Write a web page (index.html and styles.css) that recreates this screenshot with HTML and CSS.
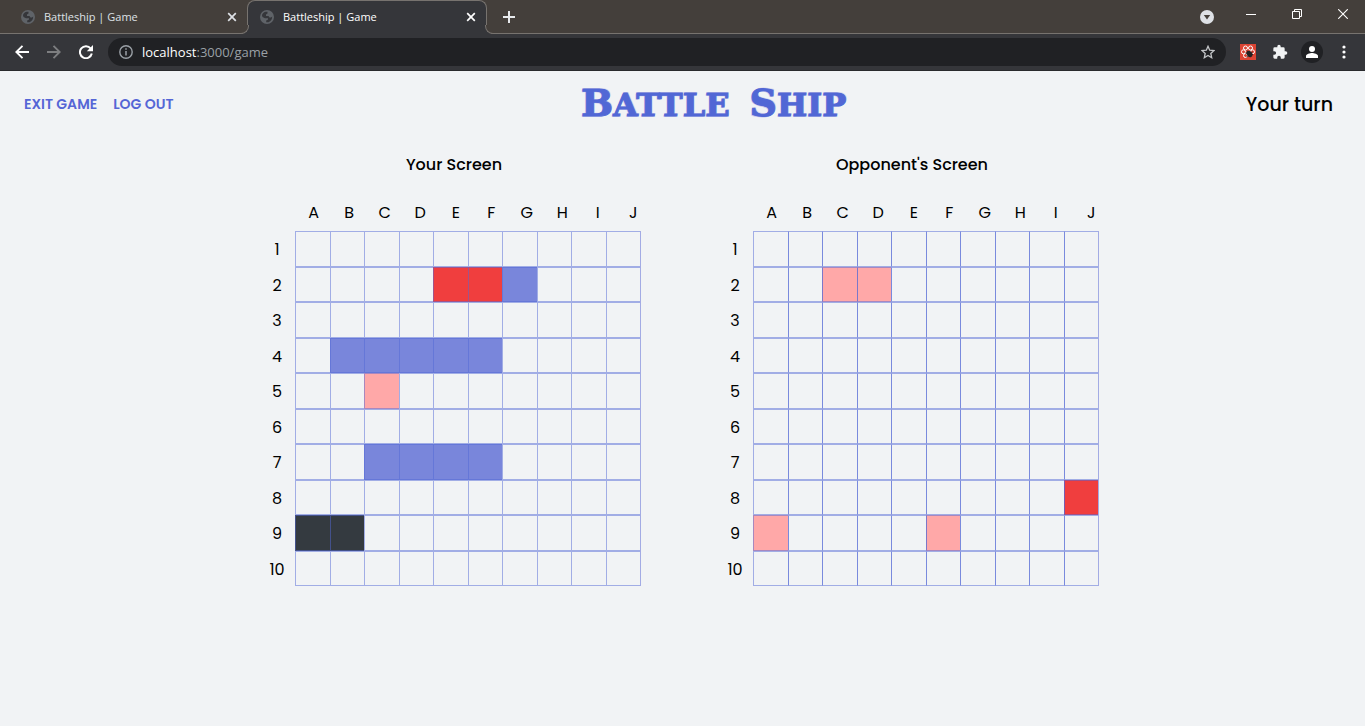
FILE: index.html
```html
<!DOCTYPE html>
<html lang="en">
<head>
<meta charset="utf-8">
<title>Battleship | Game</title>
<link rel="stylesheet" href="styles.css">
</head>
<body>
<svg width="0" height="0" class="defs" aria-hidden="true">
  <symbol id="globe" viewBox="0 0 14 14"><circle cx="7" cy="7" r="7" fill="#5f6368"/><path d="M2 5.500C2 4 3.600 2.200 5.500 1.800L7.500 1.700V3.500L6 4.600V6H8.500L9.500 7.500L11 7.600L12.200 6.500C12.300 9 11 11.300 8.500 12.200L6.200 12.200V10.500L8 9.500V8.300H5L2.500 7Z" fill="#35363a"/></symbol>
  <symbol id="cross" viewBox="0 0 10 10"><path d="M1.200 1.200L8.800 8.800M8.800 1.200L1.200 8.800" stroke="currentColor" stroke-width="1.700"/></symbol>
</svg>
<header class="browser">
  <div class="tabstrip">
    <div class="tab"><svg class="favicon"><use href="#globe"/></svg><span class="tab-name">Battleship | Game</span><button class="icon-btn tab-close" aria-label="Close tab"><svg width="10" height="10"><use href="#cross"/></svg></button></div>
    <div class="tab tab-active"><svg class="favicon"><use href="#globe"/></svg><span class="tab-name">Battleship | Game</span><button class="icon-btn tab-close" aria-label="Close tab"><svg width="10" height="10"><use href="#cross"/></svg></button></div>
    <div class="strip-rest">
      <button class="icon-btn new-tab" aria-label="New tab"><svg width="12" height="12" viewBox="0 0 12 12"><path d="M6 0V12M0 6H12" stroke="#e8eaed" stroke-width="2"/></svg></button>
      <button class="icon-btn tab-search" aria-label="Search tabs"><svg width="14" height="14" viewBox="0 0 14 14"><circle cx="7" cy="7" r="7" fill="#dee1e6"/><path d="M3.800 5H10.200L7 9.500Z" fill="#443f3b"/></svg></button>
      <div class="window-buttons">
        <button class="icon-btn" aria-label="Minimize"><svg width="10" height="10" viewBox="0 0 10 10"><path d="M0 5.500H10" stroke="#fff"/></svg></button>
        <button class="icon-btn" aria-label="Restore"><svg width="10" height="10" viewBox="0 0 10 10"><path d="M.5 2.500H7.500V9.500H.5ZM2.500 2.500V.5H9.500V7.500H7.500" fill="none" stroke="#fff"/></svg></button>
        <button class="icon-btn" aria-label="Close window"><svg width="10" height="10" viewBox="0 0 10 10"><path d="M.2.2L9.800 9.800M9.800.2L.2 9.800" stroke="#fff" stroke-width="1.100"/></svg></button>
      </div>
    </div>
  </div>
  <div class="toolbar">
    <button class="icon-btn tool" aria-label="Back"><svg width="14" height="14" viewBox="0 0 14 14"><path d="M14 7H1.500M7.500.8L1.300 7L7.500 13.200" fill="none" stroke="#fff" stroke-width="1.900"/></svg></button>
    <button class="icon-btn tool" aria-label="Forward"><svg width="14" height="14" viewBox="0 0 14 14"><path d="M0 7H12.500M6.500.8L12.700 7L6.500 13.200" fill="none" stroke="#7d7e80" stroke-width="1.900"/></svg></button>
    <button class="icon-btn tool" aria-label="Reload"><svg width="14" height="14" viewBox="0 0 14 14"><path d="M11.700 3.500A6 6 0 1 0 12.800 8.500" fill="none" stroke="#fff" stroke-width="2"/><path d="M14 0V6.200H7.800Z" fill="#fff"/></svg></button>
    <div class="address">
      <svg width="14" height="14" viewBox="0 0 14 14"><circle cx="7" cy="7" r="6.200" fill="none" stroke="#9aa0a6" stroke-width="1.400"/><path d="M7 6V10.500M7 3.300V4.800" stroke="#9aa0a6" stroke-width="1.500"/></svg>
      <span class="url"><b>localhost</b>:3000/game</span>
      <button class="icon-btn star" aria-label="Bookmark this page"><svg width="14" height="14" viewBox="0 0 14 14"><path d="M7 1.300L8.700 5.200L13 5.600L9.800 8.400L10.700 12.700L7 10.500L3.300 12.700L4.200 8.400L1 5.600L5.300 5.200Z" fill="none" stroke="#c4c6c9" stroke-width="1.300"/></svg></button>
    </div>
    <div class="extensions">
      <button class="icon-btn" aria-label="React developer tools"><svg width="16" height="16" viewBox="0 0 16 16"><path d="M0 0H16V16H0Z" fill="#dc4433"/><g fill="none" stroke="#fff" stroke-width="1"><circle cx="5.500" cy="4" r="2"/><circle cx="10.500" cy="4" r="2"/><circle cx="3.500" cy="7.800" r="2"/><circle cx="12.500" cy="7.800" r="2"/><circle cx="5.500" cy="11.500" r="2"/></g><ellipse cx="9.500" cy="10" rx="2.600" ry="3.400" transform="rotate(-30 9.500 10)" fill="#222"/><path d="M5.500 9L13 10.500M6.500 13L12.500 8M7 6.500L8.500 8.500" stroke="#222"/></svg></button>
      <button class="icon-btn" aria-label="Extensions"><svg width="16" height="16" viewBox="0 0 24 24"><path d="M20.500 11H19V7a2 2 0 0 0-2-2h-4V3.500a2.500 2.500 0 0 0-5 0V5H4a2 2 0 0 0-2 2v3.800h1.500a2.700 2.700 0 0 1 0 5.400H2V20a2 2 0 0 0 2 2h3.800v-1.500a2.700 2.700 0 0 1 5.400 0V22H17a2 2 0 0 0 2-2v-4h1.500a2.500 2.500 0 0 0 0-5z" fill="#f1f3f4"/></svg></button>
      <button class="icon-btn" aria-label="Profile"><svg width="22" height="22" viewBox="0 0 22 22"><circle cx="11" cy="11" r="11" fill="#202124"/><circle cx="11" cy="8" r="3" fill="#fff"/><path d="M5 17V15C5 13 9 12 11 12S17 13 17 15V17Z" fill="#fff"/></svg></button>
      <button class="icon-btn" aria-label="Menu"><svg width="4" height="14" viewBox="0 0 4 14" fill="#fff"><circle cx="2" cy="2" r="1.600"/><circle cx="2" cy="7" r="1.600"/><circle cx="2" cy="12" r="1.600"/></svg></button>
    </div>
  </div>
</header>
<main class="game">
  <div class="game-header">
    <nav class="nav"><a href="#">EXIT GAME</a><a href="#">LOG OUT</a></nav>
    <h1 class="logo"><span><span class="cap">B</span>ATTLE</span> <span><span class="cap">S</span>HIP</span></h1>
    <p class="turn">Your turn</p>
  </div>
  <div class="screens">
    <section class="screen">
      <h2>Your Screen</h2>
      <div class="letters"></div>
      <div class="numbers"></div>
      <div class="board" id="own"></div>
    </section>
    <section class="screen">
      <h2>Opponent's Screen</h2>
      <div class="letters"></div>
      <div class="numbers"></div>
      <div class="board board-target" id="opponent"></div>
    </section>
  </div>
</main>
<script src="game.js"></script>
</body>
</html>
```
FILE: styles.css
```css
* { box-sizing: border-box; }
body {
  margin: 0;
  min-height: 100vh;
  background: #f1f3f5;
  color: #000;
  font-family: Poppins, Inter, sans-serif;
  font-size: 16px;
}
.defs { position: absolute; }
.icon-btn {
  display: flex;
  align-items: center;
  justify-content: center;
  padding: 0;
  border: 0;
  background: none;
  color: inherit;
}
.browser { font-family: "Open Sans", "Noto Sans", sans-serif; color: #dee1e6; }
.tabstrip { display: flex; height: 34px; background: #443f3b; }
.tab {
  display: flex;
  align-items: center;
  flex: 0 1 247px;
  padding: 0 10px 0 21px;
  border-bottom: 1px solid #77736f;
  font-size: 11px;
}
.tab-active {
  position: relative;
  flex-basis: 240px;
  padding: 0 10px 2px 12px;
  border: 1px solid #77736f;
  border-bottom: 0;
  border-radius: 8px 8px 0 0;
  background: #35363a;
  color: #fff;
}
/* flared feet that join the active tab to the toolbar */
.tab-active::before,
.tab-active::after {
  content: "";
  position: absolute;
  bottom: 0;
  width: 8px;
  height: 8px;
  border-bottom: 1px solid #77736f;
  background: #443f3b;
}
.tab-active::before {
  left: -8px;
  border-right: 1px solid #77736f;
  border-bottom-right-radius: 8px;
  box-shadow: 3px 3px 0 #35363a;
  clip-path: inset(0);
}
.tab-active::after {
  right: -8px;
  border-left: 1px solid #77736f;
  border-bottom-left-radius: 8px;
  box-shadow: -3px 3px 0 #35363a;
  clip-path: inset(0);
}
.favicon { width: 14px; height: 14px; margin-right: 9px; }
.tab-name { flex: 1; white-space: nowrap; }
.strip-rest { display: flex; flex: 1; align-items: center; border-bottom: 1px solid #77736f; }
.new-tab { margin-left: 16px; }
.tab-search { margin-left: auto; }
.window-buttons { display: flex; gap: 36px; padding: 0 17px 6px 32px; }
.toolbar {
  display: flex;
  align-items: center;
  height: 37px;
  border-bottom: 1px solid #292a2d;
  background: #35363a;
}
.tool { width: 32px; }
.tool:first-child { margin-left: 6px; }
.address {
  display: flex;
  flex: 1;
  align-items: center;
  gap: 9px;
  height: 28px;
  margin-left: 6px;
  padding: 0 11px;
  border-radius: 14px;
  background: #202124;
}
.url { color: #9aa0a6; font-size: 13px; }
.url b { color: #fff; font-weight: 400; }
.star { margin-left: auto; }
.extensions { display: flex; align-items: center; gap: 13px; padding: 0 19px 0 14px; }
.extensions .icon-btn:nth-child(2) { margin-left: 3px; }
.extensions .icon-btn:last-child { margin-left: 6px; }

.game-header {
  display: flex;
  align-items: center;
  justify-content: space-between;
  height: 66px;
  padding: 0 16px;
}
.nav { display: flex; }
.nav a {
  padding: 8px;
  color: #5566d6;
  font-size: 14px;
  font-weight: 600;
  text-decoration: none;
}
.logo {
  display: flex;
  align-items: baseline;
  gap: 20px;
  margin: 0;
  color: #5167d5;
  font-family: "DejaVu Serif", serif;
  font-size: 32px;
  font-weight: 700;
  line-height: 40px;
  -webkit-text-stroke: 1px #5167d5;
  text-shadow: -1px 1px 0 #c7cbed, 1px -1px 0 #d6d0ea;
}
.cap { font-size: 38px; }
.turn { margin: 0; padding: 0 16px 0 0; font-size: 19px; font-weight: 500; }
.screens {
  display: flex;
  flex-wrap: wrap;
  justify-content: center;
  gap: 32px 84px;
  padding-left: 1px;
}
.screen {
  display: grid;
  grid-template-columns: 20px 346px;
  column-gap: 8px;
}
.screen h2 {
  grid-column: 1 / -1;
  margin: 0;
  font-size: 16px;
  font-weight: 500;
  line-height: 56px;
  text-align: center;
}
.letters {
  display: grid;
  grid-column: 2;
  grid-template-columns: repeat(10, 1fr);
  margin: 0 -10px 0 1px;
  padding-top: 2px;
  line-height: 36px;
  text-align: center;
}
.numbers {
  display: grid;
  grid-column: 1;
  grid-template-rows: repeat(10, 1fr);
  align-items: center;
  margin: 1px 0 -1px;
  text-align: center;
}
.board {
  display: grid;
  grid-template-columns: repeat(10, 1fr);
  grid-template-rows: repeat(10, 1fr);
  height: 355px;
  border-right: 1px solid #a3abe4;
}
.cell {
  padding: 0;
  border: solid rgba(81, 103, 213, .5);
  border-width: 1px 0 1px 1px;
  border-radius: 0;
  background: transparent;
}
.board-target .cell:not(:nth-child(10n + 1)) { border-left-color: rgba(81, 103, 213, .75); }
.board .ship { background: #7986db; }
.board .hit { background: #f03e3e; }
.board .miss { background: #ffa8a8; }
.board .sunk { background: #343a40; }
```
FILE: game.js
```js
const boards = {
  own: {
    tag: "div",
    cells: { E2: "hit", F2: "hit", G2: "ship", B4: "ship", C4: "ship", D4: "ship", E4: "ship", F4: "ship",
      C5: "miss", C7: "ship", D7: "ship", E7: "ship", F7: "ship", A9: "sunk", B9: "sunk" }
  },
  opponent: {
    tag: "button",
    cells: { C2: "miss", D2: "miss", J8: "hit", A9: "miss", F9: "miss" }
  }
};
const letters = [..."ABCDEFGHIJ"];

function addLabels(selector, labels) {
  document.querySelectorAll(selector).forEach(box => {
    labels.forEach(label => {
      const span = document.createElement("span");
      span.textContent = label;
      box.append(span);
    });
  });
}
addLabels(".letters", letters);
addLabels(".numbers", letters.map((_, i) => i + 1));

for (const [id, board] of Object.entries(boards)) {
  for (let row = 1; row <= 10; row++) {
    for (const letter of letters) {
      const cell = document.createElement(board.tag);
      cell.className = `cell ${board.cells[letter + row] || ""}`;
      if (board.tag === "button") cell.setAttribute("aria-label", letter + row);
      document.getElementById(id).append(cell);
    }
  }
}
```
